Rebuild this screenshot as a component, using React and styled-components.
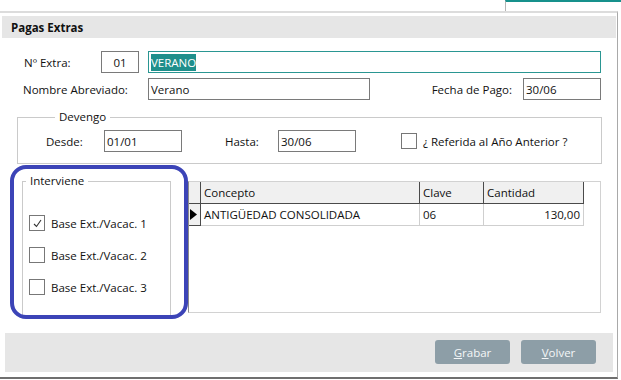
import React from 'react';
import styled, { createGlobalStyle } from 'styled-components';

const GlobalStyle = createGlobalStyle`
  html, body { margin: 0; padding: 0; background: #fff; }
  body {
    font-family: "Open Sans", "Noto Sans", sans-serif;
    font-size: 11.5px;
    color: #111;
  }
  * { box-sizing: border-box; }
`;

// Page frame
const Page = styled.div`
  width: 621px;
  height: 380px;
  display: flex;
  flex-direction: column;
  overflow: hidden;
  background: #fff;
`;

const TopStrip = styled.div`
  height: 11px;
  flex-shrink: 0;
  display: flex;
  justify-content: flex-end;
`;

const TabEdge = styled.div`
  width: 116px;
  border-left: 1px solid #b4b4b4;
  border-top: 2px solid #17918c;
`;

const Window = styled.div`
  width: 618px;
  flex: 1;
  margin-bottom: 1px;
  display: flex;
  flex-direction: column;
  border-top: 2px solid #dcdcdc;
  border-right: 1px solid #a9a9a9;
  border-bottom: 2px solid #6f6f6f;
`;

const TitleBar = styled.div`
  height: 22px;
  margin: 3px 1px 0 2px;
  padding-left: 9px;
  display: flex;
  align-items: center;
  background: #e6e6e6;
  font-weight: 700;
`;

// Form rows
const Row = styled.div`
  display: flex;
  align-items: center;
  height: 22px;
  margin-top: ${(p) => p.top || 0}px;
  padding: 0 16px 0 ${(p) => p.left || 0}px;
`;

const Label = styled.span`
  width: ${(p) => (p.width ? `${p.width}px` : 'auto')};
  margin-left: ${(p) => (p.push ? 'auto' : `${p.ml || 0}px`)};
  flex-shrink: 0;
  white-space: nowrap;
`;

const Input = styled.div`
  width: ${(p) => p.width}px;
  height: 22px;
  margin-left: ${(p) => p.ml || 0}px;
  flex-shrink: 0;
  display: flex;
  align-items: center;
  justify-content: ${(p) => (p.center ? 'center' : 'flex-start')};
  padding-left: ${(p) => (p.center ? 0 : 2)}px;
  background: #fff;
  border: 1px solid ${(p) => (p.focused ? '#2a9692' : '#7a7a7a')};
  white-space: nowrap;
`;

const Selected = styled.span`
  background: #1f8f8b;
  color: #fff;
  padding: 1px 0;
`;

// Group boxes
const Group = styled.fieldset`
  margin: ${(p) => p.top}px 0 0 ${(p) => p.left}px;
  width: ${(p) => p.width}px;
  height: ${(p) => (p.height ? `${p.height}px` : 'auto')};
  padding: ${(p) => p.pad};
  border: 1px solid #cacaca;
  flex-shrink: 0;
`;

const Legend = styled.legend`
  margin-left: ${(p) => p.ml ?? 9}px;
  padding: 0 4px;
  line-height: 16px;
`;

const GroupRow = styled.div`
  display: flex;
  align-items: center;
  height: 22px;
`;

const CheckRow = styled.div`
  display: flex;
  align-items: center;
  gap: 6px;
  height: 16px;
  margin-top: ${(p) => p.top}px;
  margin-left: ${(p) => p.left || 0}px;
`;

const Box = styled.span`
  width: 16px;
  height: 16px;
  flex-shrink: 0;
  display: flex;
  align-items: center;
  justify-content: center;
  border: 1px solid #777;
  background: #fff;
`;

const Check = ({ checked }) => (
  <Box>
    {checked ? (
      <svg width="11" height="11" viewBox="0 0 11 11">
        <polyline points="2,6 4.5,8.5 9,2" fill="none" stroke="#333" strokeWidth="1.1" />
      </svg>
    ) : null}
  </Box>
);

// Lower part: checkboxes + grid
const Lower = styled.div`
  position: relative;
  display: flex;
  align-items: flex-start;
`;

const Highlight = styled.div`
  position: absolute;
  left: 10px;
  top: 1px;
  width: 178px;
  height: 154px;
  border: 4px solid #3c44b7;
  border-radius: 16px;
  pointer-events: none;
`;

const Grid = styled.div`
  margin: 17px 0 0 17px;
  width: 413px;
  height: 132px;
  border: 1px solid #d2d2d2;
  border-left-color: #8a8a8a;
  display: grid;
  grid-template-columns: 12px 219px 64px 100px 1fr;
  grid-auto-rows: 22px;
  align-content: start;
`;

const Head = styled.div`
  display: flex;
  align-items: center;
  padding-left: 3px;
  background: ${(p) => (p.blank ? '#fff' : '#f0f0f0')};
  border-right: ${(p) => (p.blank ? 'none' : '1px solid #4a4a4a')};
  border-bottom: ${(p) => (p.blank ? 'none' : '1px solid #4a4a4a')};
`;

const Cell = styled.div`
  display: flex;
  align-items: center;
  justify-content: ${(p) => (p.right ? 'flex-end' : 'flex-start')};
  padding: 0 3px;
  background: #fff;
  border-right: 1px solid #cfcfcf;
  border-bottom: 1px solid #cfcfcf;
  white-space: nowrap;
`;

const Indicator = styled.div`
  display: flex;
  align-items: center;
  padding-left: 1px;
  background: #f0f0f0;
  border-right: 1px solid #4a4a4a;
  border-bottom: 1px solid #4a4a4a;
`;

// Bottom buttons
const ButtonBar = styled.div`
  margin: auto 4px 5px 5px;
  height: 39px;
  padding: 7px 17px 0 0;
  display: flex;
  justify-content: flex-end;
  align-items: flex-start;
  gap: 11px;
  background: #e6e6e6;
`;

const Button = styled.button`
  width: 75px;
  height: 24px;
  border: none;
  border-radius: 3px;
  background: #8d9ea7;
  color: #f4f6f7;
  font: inherit;
  padding: 0;
  u { text-decoration: underline; }
`;

export default function App() {
  return (
    <Page>
      <GlobalStyle />
      <TopStrip>
        <TabEdge />
      </TopStrip>
      <Window>
        <TitleBar>Pagas Extras</TitleBar>

        <Row top={13} left={24}>
          <Label width={77}>Nº Extra:</Label>
          <Input width={38} center>01</Input>
          <Input width={453} ml={9} focused>
            <Selected>VERANO</Selected>
          </Input>
        </Row>
        <Row top={5} left={23}>
          <Label width={125}>Nombre Abreviado:</Label>
          <Input width={222}>Verano</Input>
          <Label push>Fecha de Pago:</Label>
          <Input width={78} ml={11}>30/06</Input>
        </Row>

        <Group top={9} left={17} width={585} pad="5px 0 11px 28px">
          <Legend>Devengo</Legend>
          <GroupRow>
            <Label width={58}>Desde:</Label>
            <Input width={78}>01/01</Input>
            <Label width={53} ml={43}>Hasta:</Label>
            <Input width={78}>30/06</Input>
            <CheckRow top={0} left={45}>
              <Check />
              <span>¿ Referida al Año Anterior ?</span>
            </CheckRow>
          </GroupRow>
        </Group>

        <Lower>
          <Group top={9} left={22} width={149} height={144} pad="0">
            <Legend ml={3}>Interviene</Legend>
            <CheckRow top={26} left={6}>
              <Check checked />
              <span>Base Ext./Vacac. 1</span>
            </CheckRow>
            <CheckRow top={16} left={6}>
              <Check />
              <span>Base Ext./Vacac. 2</span>
            </CheckRow>
            <CheckRow top={16} left={6}>
              <Check />
              <span>Base Ext./Vacac. 3</span>
            </CheckRow>
          </Group>

          <Grid>
            <Head />
            <Head>Concepto</Head>
            <Head>Clave</Head>
            <Head>Cantidad</Head>
            <Head blank />
            <Indicator>
              <svg width="7" height="11" viewBox="0 0 7 11">
                <polygon points="0,0 7,5.5 0,11" fill="#000" />
              </svg>
            </Indicator>
            <Cell>ANTIGÜEDAD CONSOLIDADA</Cell>
            <Cell>06</Cell>
            <Cell right>130,00</Cell>
          </Grid>

          <Highlight />
        </Lower>

        <ButtonBar>
          <Button>
            <u>G</u>rabar
          </Button>
          <Button>
            <u>V</u>olver
          </Button>
        </ButtonBar>
      </Window>
    </Page>
  );
}
